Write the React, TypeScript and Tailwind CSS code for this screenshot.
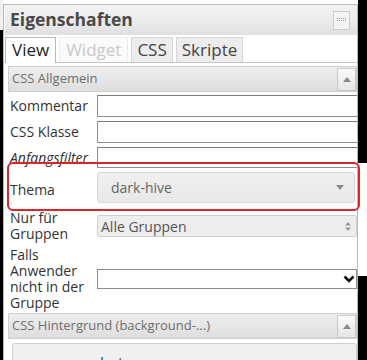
import React from "react";

const Up = () => (
  <svg width="8" height="5" viewBox="0 0 8 5"><path d="M0 5 L4 0 L8 5 Z" fill="#8a8a8a" /></svg>
);

function Section({ title, mt }: { title: string; mt: string }) {
  return (
    <div className={`${mt} ml-[4px] h-[26px] shrink-0 border border-[#cfcfcf] bg-gradient-to-b from-[#eeeeee] to-[#dedede] flex items-center justify-between pl-[3px] pr-0`}>
      <span className="text-[13px] text-[#6f6f6f]">{title}</span>
      <div className="w-[19px] h-[23px] border border-[#c8c8c8] bg-gradient-to-b from-[#fafafa] to-[#e6e6e6] flex items-center justify-center">
        <Up />
      </div>
    </div>
  );
}

function Row({ label, mt, h, italic, children }: { label: React.ReactNode; mt: string; h: string; italic?: boolean; children: React.ReactNode }) {
  return (
    <div className={`${mt} ${h} shrink-0 flex items-center`}>
      <div className={`w-[93px] shrink-0 pl-[6px] text-[14px] leading-[16px] text-[#333] ${italic ? "italic" : ""}`}>{label}</div>
      <div className="flex-1 min-w-0 flex items-center">{children}</div>
    </div>
  );
}

const Input = ({ h }: { h: string }) => (
  <div className={`w-[270px] shrink-0 ${h} bg-white border border-[#8c8c8c] border-t-[#7a7a7a]`} />
);

export default function App() {
  return (
    <div className="w-[367px] h-[360px] bg-black relative overflow-hidden flex" style={{ fontFamily: '"Open Sans", sans-serif' }}>
      <div className="w-[3px] shrink-0 flex flex-col">
        <div className="h-[30px] bg-[#f0f0f0]" />
        <div className="flex-1 bg-black" />
      </div>
      <div className="w-[355px] shrink-0 flex flex-col">
        <div className="h-[4px] bg-white shrink-0" />
        <div className="flex-1 min-h-0 border-t border-l border-r border-[#b8b8b8] bg-white overflow-hidden flex flex-col">
          {/* title bar */}
          <div className="h-[30px] shrink-0 ml-[1px] bg-gradient-to-b from-[#f3f3f3] via-[#ececec] to-[#e0e0e0] flex items-center justify-between pl-[5px] pr-[7px]">
            <span className="text-[17.5px] font-bold text-[#4a4a4a] leading-none">Eigenschaften</span>
            <div className="w-[17px] h-[19px] border border-[#cccccc] bg-[#f4f4f4] flex items-center justify-center">
              <svg width="9" height="4" viewBox="0 0 9 4">
                {[0, 2, 4, 6, 8].map((x) => (
                  <React.Fragment key={x}>
                    <rect x={x} y={0} width="1" height="1" fill="#9a9a9a" />
                    <rect x={x} y={2} width="1" height="1" fill="#9a9a9a" />
                  </React.Fragment>
                ))}
              </svg>
            </div>
          </div>
          {/* tabs */}
          <div className="mt-[2px] h-[26px] shrink-0 border-b border-[#c4c4c4] flex items-end gap-[3px] pl-[1px]">
            <div className="h-[26px] -mb-px px-[6px] border border-b-0 border-[#b9b9b9] bg-white text-[17px] text-[#222] leading-[24px]">View</div>
            <div className="h-[25px] px-[6px] border border-b-0 border-[#ececec] bg-[#fbfbfb] text-[17px] text-[#c8c8c8] leading-[24px]">Widget</div>
            <div className="h-[25px] px-[5px] border border-b-0 border-[#d6d6d6] bg-[#ececec] text-[17px] text-[#444] leading-[24px]">CSS</div>
            <div className="h-[25px] px-[5px] border border-b-0 border-[#d6d6d6] bg-[#ececec] text-[17px] text-[#444] leading-[24px]">Skripte</div>
          </div>
          <Section title="CSS Allgemein" mt="mt-[3px]" />
          <Row label="Kommentar" mt="mt-[3px]" h="h-[22px]"><Input h="h-[22px]" /></Row>
          <Row label="CSS Klasse" mt="mt-[4px]" h="h-[22px]"><Input h="h-[22px]" /></Row>
          <Row label="Anfangsfilter" mt="mt-[4px]" h="h-[21px]" italic><Input h="h-[21px]" /></Row>
          <Row label={<span className="relative top-[2px]">Thema</span>} mt="mt-[4px]" h="h-[31px]">
            <div className="w-[258px] h-[31px] rounded-[3px] border border-[#d8d8d8] bg-gradient-to-b from-[#f0f0f0] to-[#e8e8e8] flex items-center justify-between pl-[13px] pr-[10px]">
              <span className="text-[14px] text-[#666]">dark-hive</span>
              <svg width="8" height="5" viewBox="0 0 8 5"><path d="M0 0 L8 0 L4 5 Z" fill="#8a8a8a" /></svg>
            </div>
          </Row>
          <Row label={<>Nur für<br />Gruppen</>} mt="mt-[7px]" h="h-[32px]">
            <div className="w-[262px] h-[22px] rounded-[2px] border border-[#cfcfcf] bg-[#ededed] flex items-center justify-between pl-[3px] pr-[5px]">
              <span className="text-[14px] text-[#555]">Alle Gruppen</span>
              <svg width="6" height="9" viewBox="0 0 6 9"><path d="M0 3.5 L3 0 L6 3.5 Z M0 5.5 L6 5.5 L3 9 Z" fill="#9a9a9a" /></svg>
            </div>
          </Row>
          <Row label={<>Falls<br />Anwender<br />nicht in der<br />Gruppe</>} mt="mt-[5px]" h="h-[64px]">
            <div className="w-[262px] h-[20px] border border-[#8c8c8c] bg-white flex items-center justify-end pr-[1px]">
              <svg width="12" height="8" viewBox="0 0 12 8"><path d="M1.5 1.5 L6 6 L10.5 1.5" stroke="#111" strokeWidth="2.6" fill="none" /></svg>
            </div>
          </Row>
          <Section title="CSS Hintergrund (background-...)" mt="mt-[2px]" />
          <div className="mt-[4px] ml-[8px] h-[30px] shrink-0 border border-[#cfcfcf] bg-[#f0f0f0] rounded-t-[3px] pl-[60px] pt-[8px] text-[14px] text-[#333]">
            -- select --
          </div>
        </div>
      </div>
      <div className="w-[9px] shrink-0 flex flex-col">
        <div className="h-[163px] bg-black" />
        <div className="h-[113px] bg-white" />
        <div className="flex-1 bg-black" />
      </div>
      <div className="absolute left-[7px] top-[162px] w-[353px] h-[49px] border-2 border-[#d9262b] rounded-[6px] pointer-events-none" />
    </div>
  );
}
